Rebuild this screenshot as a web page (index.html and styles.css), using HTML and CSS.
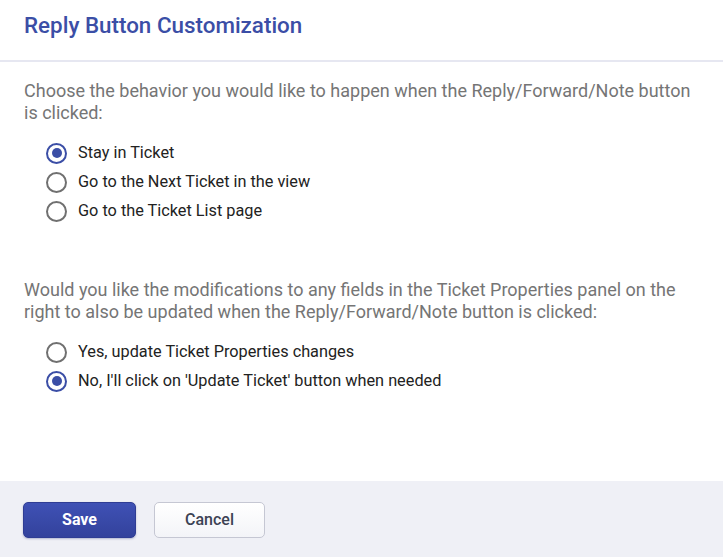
FILE: index.html
```html
<!DOCTYPE html>
<html>
<head>
<meta charset="utf-8">
<link rel="stylesheet" href="styles.css">
</head>
<body>
<div class="dialog">
  <header class="header">
    <h1 class="title">Reply Button Customization</h1>
  </header>
  <main class="content">
    <p class="question">Choose the behavior you would like to happen when the Reply/Forward/Note button is clicked:</p>
    <div class="options">
      <label class="option"><span class="radio checked"></span><span class="label">Stay in Ticket</span></label>
      <label class="option"><span class="radio"></span><span class="label">Go to the Next Ticket in the view</span></label>
      <label class="option"><span class="radio"></span><span class="label">Go to the Ticket List page</span></label>
    </div>
    <p class="question second">Would you like the modifications to any fields in the Ticket Properties panel on the right to also be updated when the Reply/Forward/Note button is clicked:</p>
    <div class="options">
      <label class="option"><span class="radio"></span><span class="label">Yes, update Ticket Properties changes</span></label>
      <label class="option"><span class="radio checked"></span><span class="label">No, I'll click on 'Update Ticket' button when needed</span></label>
    </div>
  </main>
  <footer class="footer">
    <button class="btn btn-primary">Save</button>
    <button class="btn btn-secondary">Cancel</button>
  </footer>
</div>
</body>
</html>
```
FILE: styles.css
```css
* { box-sizing: border-box; }
html, body { margin: 0; padding: 0; background: #fff; }
body { font-family: Roboto, "Liberation Sans", sans-serif; width: 723px; height: 557px; overflow: hidden; }
.dialog { display: flex; flex-direction: column; height: 557px; }
.header { height: 62px; border-bottom: 2px solid #e6e7f1; padding: 10px 24px 0; }
.title { margin: 0; font-size: 22.4px; font-weight: 500; color: #3b4ea6; line-height: 30px; }
.content { flex: 1; padding: 18px 24px 0; }
.question { margin: 0; font-size: 18px; line-height: 22px; color: #757575; }
.question.second { margin-top: 58px; }
.options { display: flex; flex-direction: column; gap: 9px; margin-top: 19px; padding-left: 22px; }
.option { display: flex; align-items: center; gap: 11px; height: 20px; }
.radio { width: 21px; height: 21px; border-radius: 50%; border: 2px solid #707070; flex: none; display: flex; align-items: center; justify-content: center; }
.radio.checked { border-color: #3b4ea6; }
.radio.checked::after { content: ""; width: 10px; height: 10px; border-radius: 50%; background: #3b4ea6; }
.label { font-size: 16.3px; color: #222; line-height: 20px; }
.footer { height: 76px; background: #eff0f6; display: flex; align-items: center; gap: 18px; padding: 1px 23px 0; }
.btn { height: 36px; border-radius: 5px; font-family: Roboto, "Liberation Sans", sans-serif; font-size: 16px; cursor: pointer; }
.btn-primary { width: 113px; background: linear-gradient(#3f51b5, #33429c); color: #fff; border: 1px solid #2f3d94; font-weight: 700; box-shadow: 0 1px 2px rgba(40,50,120,.3); }
.btn-secondary { width: 111px; background: linear-gradient(#fff, #f3f4f8); color: #3c4254; border: 1px solid #c5c7d3; font-weight: 500; }
```
